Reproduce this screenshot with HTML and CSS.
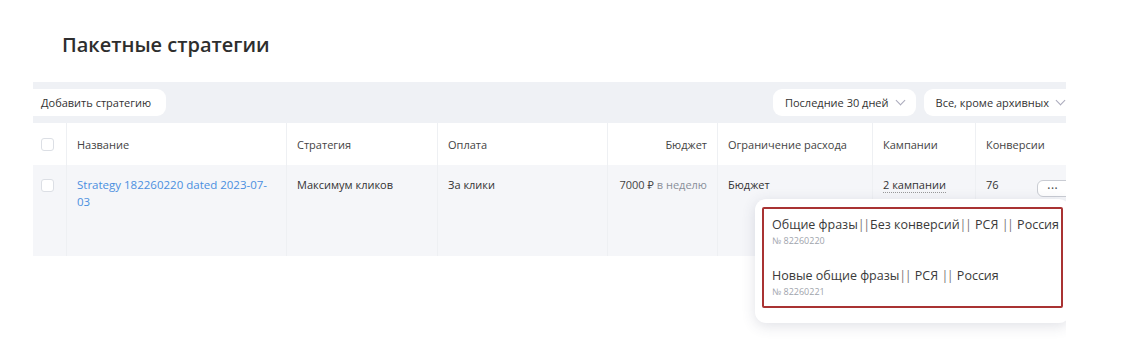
FILE: index.html
```html
<!DOCTYPE html>
<html>
<head>
<meta charset="utf-8">
<title>Пакетные стратегии</title>
<link rel="stylesheet" href="styles.css">
</head>
<body>

	<h1 class="page-title">Пакетные стратегии</h1>

	<div class="board">
		<div class="toolbar">
			<button class="pill add-btn" type="button">Добавить стратегию</button>
			<div class="filters">
				<button class="pill" type="button">Последние 30 дней <span class="chev"></span></button>
				<button class="pill" type="button">Все, кроме архивных <span class="chev"></span></button>
			</div>
		</div>

		<div class="grid head">
			<div class="cell check"><span class="box"></span></div>
			<div class="cell">Название</div>
			<div class="cell">Стратегия</div>
			<div class="cell">Оплата</div>
			<div class="cell right">Бюджет</div>
			<div class="cell">Ограничение расхода</div>
			<div class="cell">Кампании</div>
			<div class="cell">Конверсии</div>
		</div>

		<div class="grid row">
			<div class="cell check"><span class="box"></span></div>
			<div class="cell"><a class="link" href="#">Strategy 182260220 dated 2023-07-03</a></div>
			<div class="cell">Максимум кликов</div>
			<div class="cell">За клики</div>
			<div class="cell right"><span class="sum">7000 ₽</span> <span class="muted">в неделю</span></div>
			<div class="cell">Бюджет</div>
			<div class="cell"><span class="dotted">2 кампании</span></div>
			<div class="cell conv">76 <span class="more">•••</span></div>
		</div>

		<div class="popup">
			<div class="marked">
				<div class="camp">
					<div class="camp-name">Общие фразы<span class="pipes">||</span>Без конверсий<span class="pipes">||</span> РСЯ <span class="pipes">||</span> Россия</div>
					<div class="camp-id">№ 82260220</div>
				</div>
				<div class="camp">
					<div class="camp-name">Новые общие фразы<span class="pipes">||</span> РСЯ <span class="pipes">||</span> Россия</div>
					<div class="camp-id">№ 82260221</div>
				</div>
			</div>
		</div>
	</div>

</body>
</html>
```

FILE: styles.css
```css
	body {
		margin: 0;
		background: #fff;
		font-family: "Open Sans", "Noto Sans", sans-serif;
		color: #333;
	}

	.page-title {
		margin: 0;
		padding: 31px 0 0 62px;
		font-size: 20px;
		font-weight: 600;
		line-height: 28px;
		color: #2e2e2e;
	}

	.board {
		position: relative;
		width: 1033px;
		height: 264px;
		margin: 23px 0 0 33px;
		overflow: hidden;
	}

	.toolbar {
		display: flex;
		justify-content: space-between;
		align-items: center;
		height: 41px;
		box-sizing: border-box;
		padding: 7px 0 8px 0;
		background: #eff1f5;
	}

	.filters {
		display: flex;
		gap: 8px;
		margin-right: -10px;
	}

	.pill {
		display: flex;
		align-items: center;
		height: 27px;
		padding: 0 12px;
		border: none;
		border-radius: 9px;
		background: #fff;
		font-family: inherit;
		font-size: 11px;
		color: #333;
	}

	.add-btn {
		width: 133px;
		padding: 0 8px;
		border-radius: 0 9px 9px 0;
	}

	.chev {
		display: inline-block;
		width: 6px;
		height: 6px;
		margin: -4px 0 0 8px;
		border-right: 1px solid #aab;
		border-bottom: 1px solid #aab;
		transform: rotate(45deg);
	}

	.grid {
		display: grid;
		grid-template-columns: 33px 220px 151px 170px 110px 155px 103px 130px;
		font-size: 11px;
	}

	.head {
		height: 42px;
		background: #fff;
		color: #444;
	}

	.row {
		height: 91px;
		background: #f5f6f9;
	}

	.cell {
		box-sizing: border-box;
		padding: 0 10px;
		border-left: 1px solid #eef0f3;
	}

	.head .cell {
		display: flex;
		align-items: center;
	}

	.head .right {
		justify-content: flex-end;
	}

	.row .cell {
		padding-top: 11px;
		line-height: 17px;
	}

	.row .right {
		text-align: right;
	}

	.cell.check {
		border-left: none;
		padding: 0 0 0 8px;
	}

	.row .cell.check {
		padding-top: 14px;
	}

	.box {
		display: block;
		width: 13px;
		height: 13px;
		box-sizing: border-box;
		border: 1px solid #dcdfe5;
		border-radius: 3px;
		background: #fff;
	}

	.link {
		color: #4a8fe0;
		text-decoration: none;
		font-size: 11.5px;
	}

	.sum {
		color: #444;
	}

	.muted {
		color: #8a8f99;
	}

	.dotted {
		border-bottom: 1px dotted #999;
	}

	.conv {
		display: flex;
		align-items: flex-start;
	}

	.more {
		margin: 4px 0 0 38px;
		padding: 0 14px 0 10px;
		height: 17px;
		line-height: 16px;
		box-sizing: border-box;
		border: 1px solid #c9ccd3;
		border-radius: 6px;
		background: #fff;
		font-size: 7px;
		letter-spacing: 1px;
		color: #555;
	}

	.popup {
		position: absolute;
		left: 722px;
		top: 117px;
		width: 315px;
		box-sizing: border-box;
		padding: 8px 7px 15px 7px;
		background: #fff;
		border-radius: 11px;
		box-shadow: 0 3px 14px rgba(60, 70, 100, 0.16);
	}

	.marked {
		width: 301px;
		box-sizing: border-box;
		padding: 7px 8px 7px 8px;
		border: 2px solid #a93333;
		border-radius: 2px;
	}

	.camp + .camp {
		margin-top: 19px;
	}

	.camp-name {
		font-size: 12.5px;
		line-height: 18px;
		color: #3a3a3a;
		white-space: nowrap;
	}

	.pipes {
		letter-spacing: -1.5px;
		margin-right: 1.5px;
		color: #777;
	}

	.camp-id {
		font-size: 9px;
		line-height: 14px;
		color: #a0a4ac;
	}
```
